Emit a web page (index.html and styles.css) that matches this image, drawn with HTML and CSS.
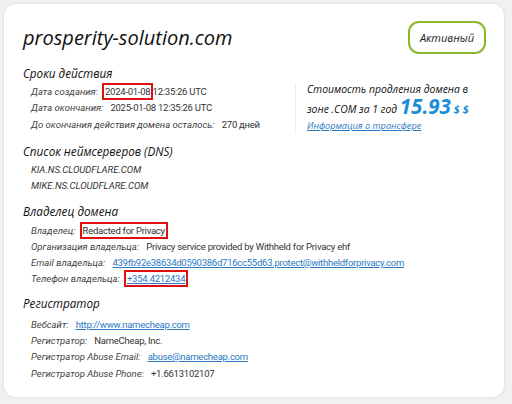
FILE: index.html
```html
<!DOCTYPE html>
<html>
<head>
    <title>prosperity-solution.com</title>
    <link rel="stylesheet" href="styles.css">
</head>
<body>
    <div class="card">
        <div class="head">
            <h1 class="domain">prosperity-solution.com</h1>
            <span class="status">Активный</span>
        </div>

        <h3 class="first">Сроки действия</h3>
        <div class="dates">
            <div class="rows">
                <div class="row"><span class="label">Дата создания:</span> <span class="mark">2024-01-08</span> 12:35:26 UTC</div>
                <div class="row"><span class="label">Дата окончания:</span> 2025-01-08 12:35:26 UTC</div>
                <div class="row"><span class="label">До окончания действия домена осталось:</span> 270 дней</div>
            </div>
            <div class="price">
                <div class="price-text">Стоимость продления домена в</div>
                <div class="price-text cost">зоне .COM за 1 год <span class="sum">15.93</span> <span class="cur">$ $</span></div>
                <a href="#" class="transfer">Информация о трансфере</a>
            </div>
        </div>

        <h3>Список неймсерверов (DNS)</h3>
        <div class="rows ns-list">
            <div class="row ns">KIA.NS.CLOUDFLARE.COM</div>
            <div class="row ns">MIKE.NS.CLOUDFLARE.COM</div>
        </div>

        <h3>Владелец домена</h3>
        <div class="rows owner">
            <div class="row"><span class="label">Владелец:</span> <span class="mark">Redacted for Privacy</span></div>
            <div class="row"><span class="label">Организация владельца:</span> Privacy service provided by Withheld for Privacy ehf</div>
            <div class="row"><span class="label">Email владельца:</span> <a href="#">439fb92e38634d0590386d716cc55d63.protect@withheldforprivacy.com</a></div>
            <div class="row"><span class="label">Телефон владельца:</span> <a href="#" class="mark">+354.4212434</a></div>
        </div>

        <h3 class="last">Регистратор</h3>
        <div class="rows">
            <div class="row"><span class="label">Вебсайт:</span> <a href="#">http://www.namecheap.com</a></div>
            <div class="row"><span class="label">Регистратор:</span> NameCheap, Inc.</div>
            <div class="row"><span class="label">Регистратор Abuse Email:</span> <a href="#">abuse@namecheap.com</a></div>
            <div class="row"><span class="label">Регистратор Abuse Phone:</span> +1.6613102107</div>
        </div>
    </div>
</body>
</html>
```

FILE: styles.css
```css
body {
    margin: 0;
    background-color: #f1f1f1;
    font-family: "Open Sans", "Noto Sans", sans-serif;
    color: #222;
}

.card {
    margin: 4px 8px 7px 4px;
    height: 393px;
    box-sizing: border-box;
    background-color: #fff;
    border-radius: 12px;
    box-shadow: 0 0 3px rgba(0, 0, 0, 0.12);
    padding: 17px 18px 0 19px;
}

.head {
    display: flex;
    justify-content: space-between;
    align-items: center;
}

.domain {
    margin: 0;
    font-size: 20px;
    line-height: 28px;
    font-style: italic;
    font-weight: 400;
    color: #111;
}

.status {
    border: 2px solid #8ab82a;
    border-radius: 11px;
    padding: 7px 10px 7px;
    font-size: 11px;
    line-height: 15px;
    font-style: italic;
    color: #222;
}

h3 {
    margin: 0 0 2px 0;
    font-size: 11.7px;
    line-height: 18px;
    font-style: italic;
    font-weight: 400;
    color: #111;
}

h3.first {
    margin-top: 10px;
}

h3.last {
    margin-bottom: 5px;
}

.rows {
    padding-left: 8px;
    margin-bottom: 8px;
}

.rows.ns-list {
    margin-top: 2px;
    margin-bottom: 7px;
}

.rows.owner {
    margin-top: 3px;
    margin-bottom: 6px;
}

.dates {
    display: flex;
    margin-bottom: 8px;
}

.dates .rows {
    width: 264px;
    margin: 0;
    border-right: 1px solid #eee;
}

.row {
    font-family: Roboto, "Open Sans", sans-serif;
    font-size: 9.5px;
    line-height: 16.3px;
    letter-spacing: -0.25px;
    color: #333;
    white-space: nowrap;
}

.label {
    font-style: italic;
    letter-spacing: 0;
    color: #444;
    margin-right: 5px;
}

.ns {
    font-style: italic;
    letter-spacing: 0;
    color: #333;
}

.row a {
    color: #2a78c2;
}

.mark {
    outline: 2px solid #e01010;
    outline-offset: 1px;
}

.price {
    margin-top: -4px;
    padding-left: 11px;
    font-size: 10.4px;
    font-style: italic;
    color: #111;
}

.price-text {
    line-height: 18px;
    white-space: nowrap;
}

.price-text.cost {
    margin-top: 2px;
}

.sum {
    font-size: 20.5px;
    font-weight: 700;
    color: #1a8ed6;
    line-height: 10px;
    vertical-align: -1px;
}

.cur {
    font-size: 11px;
    font-weight: 700;
    color: #1a8ed6;
}

.transfer {
    font-size: 9.2px;
    line-height: 16px;
    color: #2a78c2;
}
```
